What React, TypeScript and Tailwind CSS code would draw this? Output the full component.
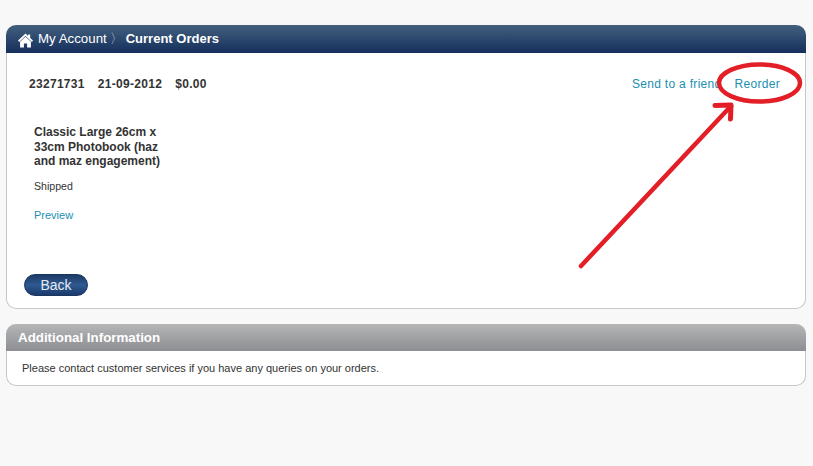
const linkClass = 'text-[#1a8fb0] hover:underline';

export default function App() {
  return (
    <div className="relative min-h-[466px] bg-[#f8f8f8] px-[6px] pt-[25px] font-['Liberation_Sans',Arial,sans-serif] text-[#333]">
      {/* Заказ */}
      <div className="w-[800px] rounded-[10px] border border-t-0 border-[#c8c8c8] bg-white">
        <div className="-mx-px flex h-[28px] items-center rounded-t-[10px] bg-gradient-to-b from-[#44607f] to-[#142f5b] pl-[12px] text-white">
          <svg viewBox="0 0 16 15" className="mr-[5px] mt-[3px] h-[15px] w-[15px]" fill="currentColor">
            <path d="M8 0 0 7.6l1.2 1.4L8 2.8 14.8 9l1.2-1.4-3-2.8V1h-2.2v1.8L8 0Z" />
            <path d="M2.2 8.8 8 3.4l5.8 5.4V15H9.7v-4.2H6.3V15H2.2V8.8Z" />
          </svg>
          <span className="text-[13.3px]">My Account</span>
          <span className="ml-[3px] text-[13px] font-light text-[#b9c5d4]">〉</span>
          <span className="ml-[3px] text-[13px] font-bold">Current Orders</span>
        </div>

        <div className="flex h-[255px] flex-col pb-[12px] pl-[17px] pr-[25px]">
          <div className="mt-[22px] flex items-center justify-between text-[12px] leading-[18px] tracking-[0.3px]">
            <div className="flex gap-[13px] pl-[5px] font-bold">
              <span>23271731</span>
              <span>21-09-2012</span>
              <span>$0.00</span>
            </div>
            <div className="flex gap-[13px]">
              <a className={linkClass}>Send to a friend</a>
              <a className={linkClass}>Reorder</a>
            </div>
          </div>

          <div className="mt-[32px] w-[142px] pl-[10px] text-[12px] font-bold leading-[14.5px]">
            Classic Large 26cm x 33cm Photobook (haz and maz engagement)
          </div>
          <div className="mt-[10px] pl-[10px] text-[10.6px] leading-[14px]">Shipped</div>
          <a className={`${linkClass} mt-[15px] pl-[10px] text-[11px] leading-[14px]`}>Preview</a>

          <button className="mt-auto flex h-[22px] w-[64px] items-center justify-center rounded-full border border-[#1b355f] bg-gradient-to-b from-[#1d3a66] via-[#2f5a92] to-[#1a3a6c] text-[14px] text-[#e6ebf2]">
            Back
          </button>
        </div>
      </div>

      {/* Дополнительно */}
      <div className="mt-[15px] w-[800px] rounded-[10px] border border-t-0 border-[#c8c8c8] bg-white">
        <div className="-mx-px flex h-[27px] items-center rounded-t-[10px] bg-gradient-to-b from-[#b5b6b8] to-[#8d8e91] pl-[12px] text-[13.33px] font-bold text-white">
          Additional Information
        </div>
        <div className="flex h-[34px] items-center pl-[15px] text-[11px]">
          Please contact customer services if you have any queries on your orders.
        </div>
      </div>

      {/* Пометка поверх скриншота */}
      <svg className="pointer-events-none absolute left-0 top-0" width="813" height="466" fill="none" stroke="#e31e26" strokeLinecap="round" strokeLinejoin="round">
        <ellipse cx="759.5" cy="83" rx="40.5" ry="18.5" strokeWidth="4.5" />
        <path d="M581 266 731 106" strokeWidth="4.5" />
        <path d="M715 105.5 731 105 730.5 119" strokeWidth="5" />
      </svg>
    </div>
  );
}
